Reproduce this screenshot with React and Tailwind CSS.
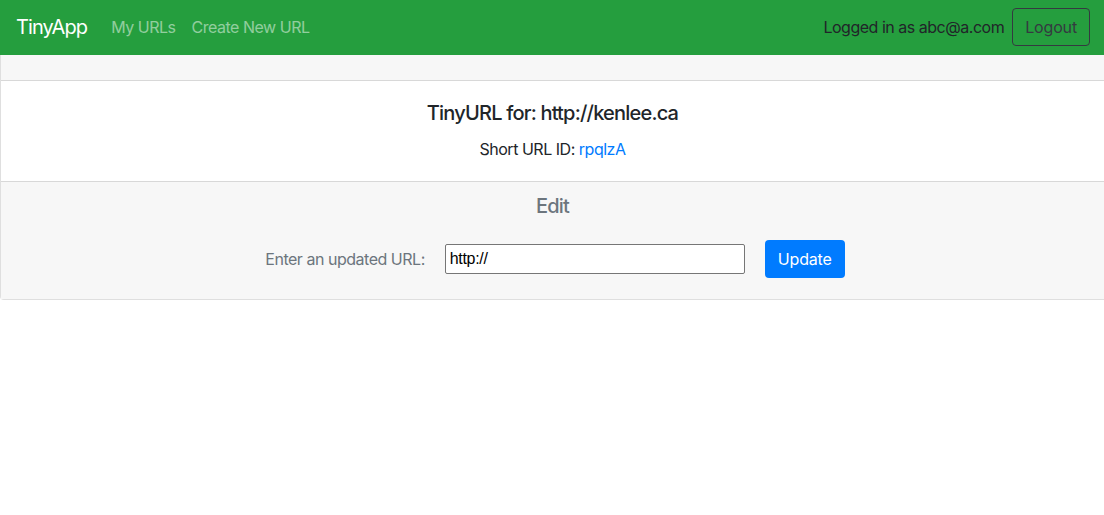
export default function App() {
  const font = { fontFamily: "Inter, 'Noto Sans', 'Liberation Sans', sans-serif" };
  return (
    <div className="min-h-[515px] bg-white text-[#212529] tracking-[-0.03em]" style={font}>
      <nav className="h-[55px] bg-[#259e3e] flex items-center pl-4 pr-[14px] pb-[1px]">
        <span className="text-[20px] text-white mr-4 leading-[30px] tracking-[-0.045em]">TinyApp</span>
        <a className="px-2 text-[16px] text-white/50">My URLs</a>
        <a className="px-2 text-[16px] text-white/50">Create New URL</a>
        <div className="ml-auto flex items-center">
          <span className="text-[16px] text-[#212529] mr-2">Logged in as abc@a.com</span>
          <button className="h-[38px] px-[12px] border border-[#343a40] rounded text-[16px] text-[#343a40] tracking-[-0.01em]">Logout</button>
        </div>
      </nav>
      <div className="border-l border-b border-black/[.125] rounded-bl">
        <div className="h-[26px] bg-[#f7f7f7] border-b border-black/[.125]"></div>
        <div className="px-5 pt-5 pb-5 text-center">
          <h5 className="text-[20px] font-medium leading-[24px] mb-3 tracking-[-0.04em]">TinyURL for: http://kenlee.ca</h5>
          <p className="text-[16px] leading-[24px]">
            Short URL ID: <a className="text-[#007bff]">rpqlzA</a>
          </p>
        </div>
        <div className="bg-[#f7f7f7] border-t border-black/[.125] px-5 pt-[12px] pb-[21px] text-center">
          <h5 className="text-[20px] font-medium leading-[24px] text-[#6c757d] tracking-[-0.04em]">Edit</h5>
          <div className="flex items-center justify-center mt-[22px] pl-[5px]">
            <label className="text-[16px] text-[#6c757d] mr-5">Enter an updated URL:</label>
            <input
              defaultValue="http://"
              className="w-[300px] h-[30px] border border-[#767676] rounded-[2px] bg-white px-[4px] text-[16px] tracking-[-0.02em] text-black outline-none"
              style={{ fontFamily: "'Liberation Sans', Arial, sans-serif" }}
            />
            <button className="ml-5 h-[38px] px-[13px] bg-[#007bff] text-white text-[16px] rounded tracking-[-0.01em]">Update</button>
          </div>
        </div>
      </div>
    </div>
  );
}
